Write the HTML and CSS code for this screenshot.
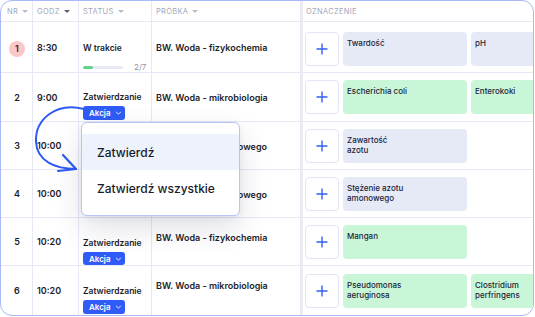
FILE: index.html
```html
<!DOCTYPE html>
<html lang="pl">
<head>
<meta charset="utf-8">
<link rel="stylesheet" href="styles.css">
</head>
<body>
<div class="card">
  <div class="grid">
    <div class="hd h-nr">NR <span class="caret"></span></div>
    <div class="hd">GODZ <span class="caret dark"></span></div>
    <div class="hd">STATUS <span class="caret"></span></div>
    <div class="hd">PRÓBKA <span class="caret"></span></div>
    <div class="hd h-ozn">OZNACZENIE</div>

    <!-- row 1 -->
    <div class="cell c-nr"><span class="badge">1</span></div>
    <div class="cell c-godz">8:30</div>
    <div class="cell c-status st-progress">
      <div class="st-text">W trakcie</div>
      <div class="progress"><div class="track"><div class="fill" style="width:25%"></div></div><span class="count">2/7</span></div>
    </div>
    <div class="cell c-probka">BW. Woda - fizykochemia</div>
    <div class="cell c-ozn first">
      <button class="add"><svg viewBox="0 0 12 12" width="12" height="12"><path d="M6 0.5V11.5M0.5 6H11.5" stroke="#3561f5" stroke-width="1.4"/></svg></button>
      <div class="tag blue">Twardość</div>
      <div class="tag blue">pH</div>
    </div>

    <!-- row 2 -->
    <div class="cell c-nr">2</div>
    <div class="cell c-godz">9:00</div>
    <div class="cell c-status">
      <div class="st-text">Zatwierdzanie</div>
      <button class="akcja">Akcja <svg viewBox="0 0 8 5" width="7" height="4"><path d="M1 1L4 4L7 1" fill="none" stroke="#fff" stroke-width="1.1"/></svg></button>
    </div>
    <div class="cell c-probka">BW. Woda - mikrobiologia</div>
    <div class="cell c-ozn">
      <button class="add"><svg viewBox="0 0 12 12" width="12" height="12"><path d="M6 0.5V11.5M0.5 6H11.5" stroke="#3561f5" stroke-width="1.4"/></svg></button>
      <div class="tag green">Escherichia coli</div>
      <div class="tag green">Enterokoki</div>
    </div>

    <!-- row 3 -->
    <div class="cell c-nr">3</div>
    <div class="cell c-godz">10:00</div>
    <div class="cell c-status"></div>
    <div class="cell c-probka hidden-start"><span class="tail">owego</span></div>
    <div class="cell c-ozn">
      <button class="add"><svg viewBox="0 0 12 12" width="12" height="12"><path d="M6 0.5V11.5M0.5 6H11.5" stroke="#3561f5" stroke-width="1.4"/></svg></button>
      <div class="tag blue">Zawartość<br>azotu</div>
    </div>

    <!-- row 4 -->
    <div class="cell c-nr">4</div>
    <div class="cell c-godz">10:00</div>
    <div class="cell c-status"></div>
    <div class="cell c-probka hidden-start"><span class="tail">owego</span></div>
    <div class="cell c-ozn">
      <button class="add"><svg viewBox="0 0 12 12" width="12" height="12"><path d="M6 0.5V11.5M0.5 6H11.5" stroke="#3561f5" stroke-width="1.4"/></svg></button>
      <div class="tag blue">Stężenie azotu<br>amonowego</div>
    </div>

    <!-- row 5 -->
    <div class="cell c-nr">5</div>
    <div class="cell c-godz">10:20</div>
    <div class="cell c-status st-low">
      <div class="st-text">Zatwierdzanie</div>
      <button class="akcja">Akcja <svg viewBox="0 0 8 5" width="7" height="4"><path d="M1 1L4 4L7 1" fill="none" stroke="#fff" stroke-width="1.1"/></svg></button>
    </div>
    <div class="cell c-probka top">BW. Woda - fizykochemia</div>
    <div class="cell c-ozn">
      <button class="add"><svg viewBox="0 0 12 12" width="12" height="12"><path d="M6 0.5V11.5M0.5 6H11.5" stroke="#3561f5" stroke-width="1.4"/></svg></button>
      <div class="tag green">Mangan</div>
    </div>

    <!-- row 6 -->
    <div class="cell c-nr last">6</div>
    <div class="cell c-godz last">10:20</div>
    <div class="cell c-status st-low last">
      <div class="st-text">Zatwierdzanie</div>
      <button class="akcja">Akcja <svg viewBox="0 0 8 5" width="7" height="4"><path d="M1 1L4 4L7 1" fill="none" stroke="#fff" stroke-width="1.1"/></svg></button>
    </div>
    <div class="cell c-probka top last">BW. Woda - mikrobiologia</div>
    <div class="cell c-ozn last">
      <button class="add"><svg viewBox="0 0 12 12" width="12" height="12"><path d="M6 0.5V11.5M0.5 6H11.5" stroke="#3561f5" stroke-width="1.4"/></svg></button>
      <div class="tag green">Pseudomonas<br>aeruginosa</div>
      <div class="tag green">Clostridium<br>perfringens</div>
    </div>
  </div>

  <svg class="arrow" width="90" height="80" viewBox="0 0 90 80">
    <path d="M83 108 C 55 101, 34 118, 35 141 C 36 160, 54 168, 75 168" transform="translate(0,-100)" fill="none" stroke="#2f5bf5" stroke-width="2" stroke-linecap="round"/>
    <path d="M62 154 L75 168 L57 170" transform="translate(0,-100)" fill="none" stroke="#2f5bf5" stroke-width="2.2" stroke-linecap="round" stroke-linejoin="round"/>
  </svg>

  <div class="menu">
    <div class="menu-item active">Zatwierdź</div>
    <div class="menu-item">Zatwierdź wszystkie</div>
  </div>
</div>
</body>
</html>
```

FILE: styles.css
```css
* { box-sizing: border-box; }
html, body { margin: 0; padding: 0; background: #fff; }
body {
  font-family: Inter, "Noto Sans", sans-serif;
  color: #1c1d2b;
  width: 535px;
  height: 317px;
  overflow: hidden;
}
.card {
  position: relative;
  width: 534px;
  height: 316px;
  border: 1px solid #a9b9f8;
  border-radius: 12px;
  overflow: hidden;
  background: #fff;
}
.grid {
  display: grid;
  grid-template-columns: 32px 46px 73px 149px 1fr;
  grid-template-rows: 21px 51px 49px 48px 48px 48px 49px;
  height: 100%;
}
.hd {
  display: flex;
  align-items: center;
  gap: 4px;
  font-size: 7.5px;
  letter-spacing: 0.3px;
  color: #a2a7ba;
  border-right: 1px solid #e6e9f4;
  border-bottom: 1px solid #e6e9f4;
  padding-left: 4px;
  white-space: nowrap;
}
.hd.h-nr { padding-left: 6px; }
.hd.h-ozn { border-right: none; border-left: 2px solid #ececf1; padding-left: 3px; }
.caret {
  width: 0; height: 0;
  border-left: 3.5px solid transparent;
  border-right: 3.5px solid transparent;
  border-top: 3.5px solid #b8bdcd;
}
.caret.dark { border-top-color: #5c5f70; }

.cell {
  display: flex;
  align-items: center;
  border-right: 1px solid #e6e9f4;
  border-bottom: 1px solid #e6e9f4;
  font-size: 9px;
  font-weight: 600;
  white-space: nowrap;
  overflow: hidden;
}
.cell.last { border-bottom: none; }
.c-nr { justify-content: center; padding-left: 1px; }
.c-godz { padding-left: 4px; }
.c-status {
  flex-direction: column;
  align-items: flex-start;
  justify-content: flex-start;
  padding: 19px 0 0 4px;
}
.c-status.st-progress { padding-top: 21px; }
.c-status.st-low { padding-top: 20px; }
.st-text { line-height: 11px; font-weight: 600; font-size: 8.5px; }
.c-probka { padding-left: 4px; }
.c-probka.top { align-items: flex-start; padding-top: 14px; }
.c-probka.hidden-start { justify-content: flex-end; padding-right: 33px; padding-top: 1px; }
.c-ozn {
  border-right: none;
  border-left: 2px solid #ececf1;
  padding-left: 2px;
  gap: 4px;
  font-weight: 500;
}
.c-ozn.first { padding-top: 4px; }

.badge {
  width: 16px; height: 16px;
  border-radius: 50%;
  background: #fbc7c7;
  color: #4a1b1b;
  display: flex;
  align-items: center;
  justify-content: center;
  font-size: 9px;
  font-weight: 600;
  margin-top: 3px;
}

.progress {
  display: flex;
  align-items: center;
  gap: 11px;
  margin-top: 8px;
}
.track {
  width: 40px; height: 3px;
  border-radius: 2px;
  background: #e7eaf5;
  overflow: hidden;
}
.fill { height: 100%; background: #5fd58c; border-radius: 2px; }
.count { font-size: 8px; font-weight: 400; color: #8e93a8; }

.akcja {
  margin-top: 3px;
  height: 14px;
  width: 42px;
  padding: 0 0 0 6px;
  display: flex;
  align-items: center;
  gap: 4px;
  border: none;
  border-radius: 3px;
  background: #2f5cf6;
  color: #fff;
  font-family: inherit;
  font-size: 8px;
  font-weight: 600;
}

.add {
  flex: none;
  width: 34px; height: 34px;
  border: 1px solid #e2e6f4;
  border-radius: 4px;
  background: #fff;
  display: flex;
  align-items: center;
  justify-content: center;
  padding: 0;
}
.tag {
  flex: none;
  width: 124px;
  height: 34px;
  border-radius: 4px;
  padding: 6px 4px 0 4px;
  font-size: 8px;
  line-height: 10px;
  font-weight: 500;
  color: #23243a;
  white-space: normal;
}
.tag.blue { background: #e6eaf7; }
.tag.green { background: #c9f6d7; }

.arrow {
  position: absolute;
  left: 0;
  top: 100px;
  overflow: visible;
}

.menu {
  position: absolute;
  left: 80px;
  top: 121px;
  width: 159px;
  height: 94px;
  background: #fff;
  border: 1px solid #b5c4f9;
  border-radius: 6px;
  padding-top: 11px;
  box-shadow: 0 12px 30px rgba(25, 35, 70, 0.14), 0 2px 6px rgba(25, 35, 70, 0.06);
}
.menu-item {
  height: 36px;
  display: flex;
  align-items: center;
  padding-left: 15px;
  font-size: 12px;
  font-weight: 500;
  color: #1a1b28;
}
.menu-item.active { background: #eef2fd; }
```
